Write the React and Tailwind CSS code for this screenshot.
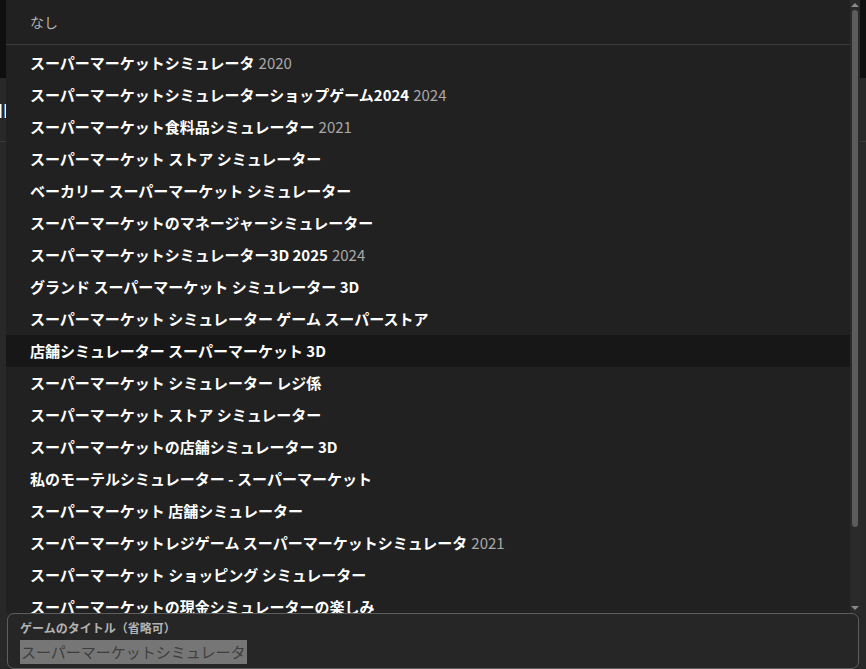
import React from "react";

const items = [
  ["スーパーマーケットシミュレータ", "2020"],
  ["スーパーマーケットシミュレーターショップゲーム2024", "2024"],
  ["スーパーマーケット食料品シミュレーター", "2021"],
  ["スーパーマーケット ストア シミュレーター", ""],
  ["ベーカリー スーパーマーケット シミュレーター", ""],
  ["スーパーマーケットのマネージャーシミュレーター", ""],
  ["スーパーマーケットシミュレーター3D 2025", "2024"],
  ["グランド スーパーマーケット シミュレーター 3D", ""],
  ["スーパーマーケット シミュレーター ゲーム スーパーストア", ""],
  ["店舗シミュレーター スーパーマーケット 3D", "", true],
  ["スーパーマーケット シミュレーター レジ係", ""],
  ["スーパーマーケット ストア シミュレーター", ""],
  ["スーパーマーケットの店舗シミュレーター 3D", ""],
  ["私のモーテルシミュレーター - スーパーマーケット", ""],
  ["スーパーマーケット 店舗シミュレーター", ""],
  ["スーパーマーケットレジゲーム スーパーマーケットシミュレータ", "2021"],
  ["スーパーマーケット ショッピング シミュレーター", ""],
  ["スーパーマーケットの現金シミュレーターの楽しみ", ""],
];

const font = { fontFamily: '"Noto Sans CJK JP", "Noto Sans", Roboto, sans-serif' };

export default function App() {
  return (
    <div className="relative w-[866px] h-[669px] overflow-hidden bg-[#282828]" style={font}>
      {/* background page */}
      <div className="h-[78px] bg-[#0f0f0f]" />
      <div className="h-[64px] border-b border-[#3a3a3a] flex items-center">
        <span className="text-white text-[18px] font-bold leading-none -ml-[6px]">Ⅱ</span>
      </div>

      {/* overlay */}
      <div className="absolute inset-0 flex flex-col pl-[6px] pr-[6px]">
        <div className="h-[613px] flex bg-[#212121] overflow-hidden">
          <div className="flex-1 flex flex-col overflow-hidden">
            <div className="h-[44px] shrink-0 flex items-center pl-[24px] text-[14px] text-[#b5b5b5]">なし</div>
            <div className="h-px shrink-0 bg-[#3c3c3c]" />
            <div className="pt-[2px] flex flex-col">
              {items.map(([t, y, hl], i) => (
                <div
                  key={i}
                  className={`h-[32px] shrink-0 flex items-center pl-[24px] text-[15px] whitespace-nowrap ${hl ? "bg-[#171717]" : ""}`}
                >
                  <span className="font-bold text-white">{t}</span>
                  {y && <span className="ml-[4px] text-[#a8a8a8]">{y}</span>}
                </div>
              ))}
            </div>
          </div>
          {/* scrollbar */}
          <div className="w-[10px] shrink-0 bg-[#2a2a2a] flex flex-col items-center relative">
            <div className="h-[8px] flex items-center justify-center pt-[2px]">
              <div className="w-0 h-0 border-l-[4px] border-r-[4px] border-b-[4px] border-l-transparent border-r-transparent border-b-[#8a8a8a]" />
            </div>
            <div className="mt-[2px] w-[6px] h-[517px] rounded-full bg-[#5c5c5c]" />
            <div className="flex-1" />
            <div className="h-[10px] flex items-center justify-center">
              <div className="w-0 h-0 border-l-[4px] border-r-[4px] border-t-[4px] border-l-transparent border-r-transparent border-t-[#8a8a8a]" />
            </div>
          </div>
        </div>
        <div className="ml-[1px] mr-[1px] h-[56px] rounded-[7px] border border-[#5e5e5e] bg-[#262626] flex flex-col pl-[12px] pt-[6px]">
          <div className="text-[12px] font-bold text-[#b3b3b3] leading-[16px]">ゲームのタイトル（省略可）</div>
          <div className="mt-[4px] flex">
            <span className="bg-[#767676] text-[#3e3e3e] text-[15px] leading-[24px] px-[1px]">スーパーマーケットシミュレータ</span>
          </div>
        </div>
      </div>
    </div>
  );
}
